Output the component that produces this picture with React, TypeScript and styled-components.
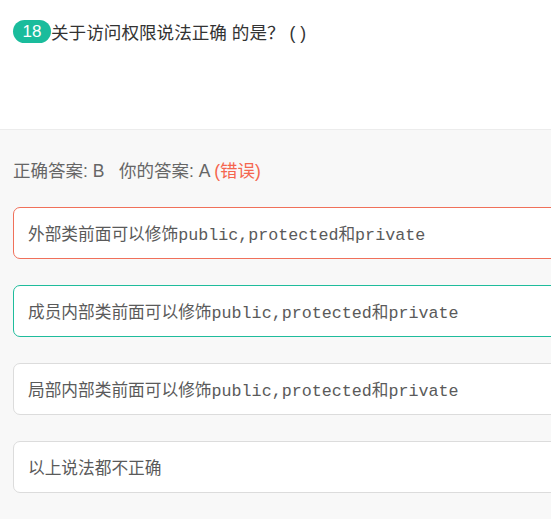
import React from "react";
import styled, { createGlobalStyle } from "styled-components";

const GlobalStyle = createGlobalStyle`
    html, body {
        margin: 0;
        padding: 0;
        background: #f8f8f8;
        overflow: hidden;
    }

    body {
        font-family: "Liberation Sans", "Noto Sans CJK SC", sans-serif;
    }
`;

const Page = styled.div`
    display: flex;
    flex-direction: column;
    width: 551px;
    height: 519px;
    overflow: hidden;
`;

const Header = styled.div`
    display: flex;
    flex-direction: row;
    align-items: center;
    align-self: stretch;

    height: 130px;
    box-sizing: border-box;
    padding: 0 13px 66px;

    background: white;
    border-bottom: 1px solid #ececec;
`;

const Badge = styled.span`
    display: inline-flex;
    align-items: center;
    justify-content: center;

    width: 38px;
    height: 23px;
    border-radius: 12px;

    background: #1abc9c;
    color: white;
    font-size: 17px;
`;

const Question = styled.span`
    font-size: 17.6px;
    color: #333;
    white-space: pre;
`;

const Body = styled.div`
    display: flex;
    flex-direction: column;
    padding: 27px 0 0 13px;
`;

const AnswerLine = styled.div`
    font-size: 17.5px;
    color: #666;
    white-space: pre;
    margin-bottom: 25px;
`;

const Wrong = styled.span`
    color: #f5664f;
`;

const OptionList = styled.div`
    display: flex;
    flex-direction: column;
    gap: 26px;
`;

type Status = "wrong" | "right" | "none";

const borderColors: Record<Status, string> = {
    wrong: "#f0705a",
    right: "#1fbc9c",
    none: "#dcdcdc",
};

const Option = styled.div<{ $status: Status }>`
    display: flex;
    align-items: center;

    width: 580px;
    height: 52px;
    box-sizing: border-box;
    padding-left: 14px;

    background: white;
    border: 1px solid ${(p) => borderColors[p.$status]};
    border-radius: 7px;

    font-family: "Liberation Mono", "Noto Sans CJK SC", monospace;
    font-size: 16.7px;
    color: #5a5a5a;
`;

const options: { text: string; status: Status }[] = [
    { text: "外部类前面可以修饰public,protected和private", status: "wrong" },
    { text: "成员内部类前面可以修饰public,protected和private", status: "right" },
    { text: "局部内部类前面可以修饰public,protected和private", status: "none" },
    { text: "以上说法都不正确", status: "none" },
];

export default function App() {
    return (
        <Page>
            <GlobalStyle />
            <Header>
                <Badge>18</Badge>
                <Question>关于访问权限说法正确 的是？ ( )</Question>
            </Header>
            <Body>
                <AnswerLine>
                    正确答案: B   你的答案: A <Wrong>(错误)</Wrong>
                </AnswerLine>
                <OptionList>
                    {options.map((o) => (
                        <Option key={o.text} $status={o.status}>
                            {o.text}
                        </Option>
                    ))}
                </OptionList>
            </Body>
        </Page>
    );
}
